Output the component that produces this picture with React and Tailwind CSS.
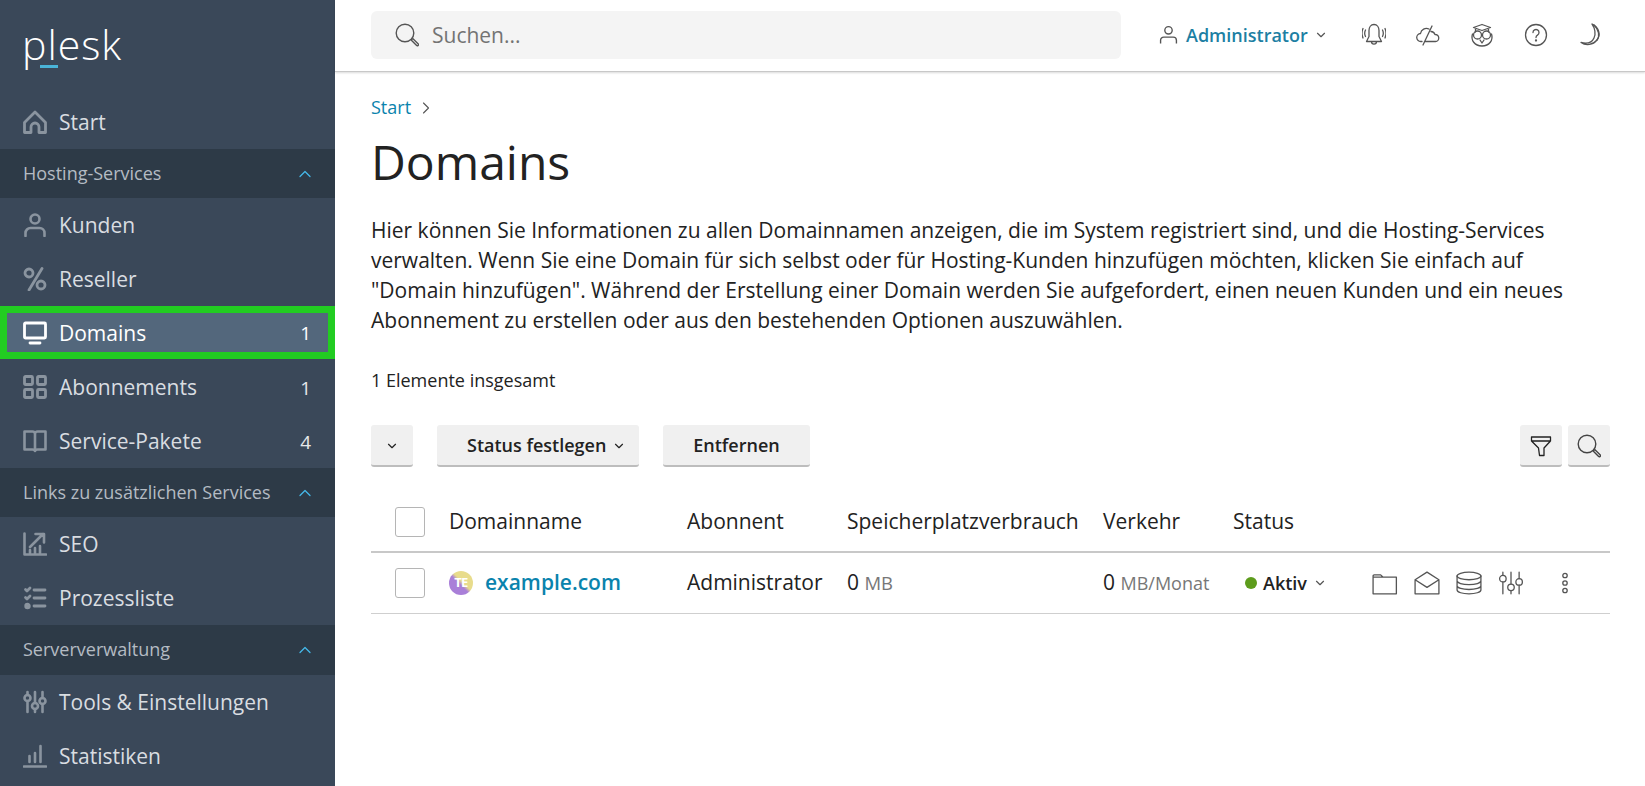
import { ChevronDown, ChevronRight, ChevronUp } from 'lucide-react'

function Icon({ children, className = 'w-6 h-6', stroke = 1.6 }) {
  return (
    <svg viewBox="0 0 24 24" fill="none" stroke="currentColor" strokeWidth={stroke} strokeLinecap="round" strokeLinejoin="round" className={className}>
      {children}
    </svg>
  )
}

const Home = () => <Icon stroke={2.8}><path d="M1.500 12.500 12 2l10.500 10.500v10h-6.500V17a4 4 0 0 0-8 0v5.500H1.500z" /></Icon>
const User = () => <Icon stroke={2.6}><circle cx="12" cy="6" r="4.500" /><path d="M2.500 23v-3a5 5 0 0 1 5-5h9a5 5 0 0 1 5 5v3" /></Icon>
const Percent = () => <Icon stroke={2.8}><circle cx="6" cy="6" r="4" /><circle cx="18" cy="18" r="4" /><path d="M19 1.500 6 23" /></Icon>
const Monitor = () => (
  <Icon stroke={2.8}><rect x="1.500" y="2" width="21" height="15" rx="1" /><path d="M7 22h10" /></Icon>
)
const Grid = () => (
  <Icon stroke={2.800}>
    <rect x="1.500" y="1.500" width="8" height="8" rx="1" />
    <rect x="14.500" y="1.500" width="8" height="8" rx="1" />
    <rect x="1.500" y="14.500" width="8" height="8" rx="1" />
    <rect x="14.500" y="14.500" width="8" height="8" rx="1" />
  </Icon>
)
const Book = () => <Icon stroke={2.600}><path d="M1.500 2.500h8c1.500 0 2.500 1 2.500 2.500 0-1.500 1-2.500 2.500-2.500h8v18h-8c-1 0-2 .5-2.500 1.500-.5-1-1.500-1.500-2.500-1.500h-8zM12 5v17" /></Icon>
const Seo = () => <Icon stroke={2.600}><path d="M1.500 1.500v21h21.500M7 15 20 2M12.500 2H21v8.500M7 21v-3M12 21v-5M17 21v-7" /></Icon>
const Tasks = () => (
  <Icon stroke={2.800}>
    <path d="M2.500 3.500 4 5l3-3M2.500 11.500 4 13l3-3M11 4h11M11 12h11M11 20h11" />
    <circle cx="4.500" cy="20" r="1.800" fill="currentColor" />
  </Icon>
)
const Sliders = ({ stroke = 2.6, className }) => (
  <Icon stroke={stroke} className={className}>
    <path d="M4.500 2v3M4.500 11v11M12 2v11M12 19v3M19.500 2v6M19.500 14v8" />
    <circle cx="4.500" cy="8" r="3" />
    <circle cx="12" cy="16" r="3" />
    <circle cx="19.500" cy="11" r="3" />
  </Icon>
)
const Stats = () => <Icon stroke={2.600}><path d="M1 22.500h22M6.500 18v-6M12 18v-9M17.500 18V2" /></Icon>

const Search = ({ className }) => (
  <svg viewBox="0 0 24 24" fill="none" stroke="currentColor" strokeWidth="1.400" strokeLinecap="round" strokeLinejoin="round" className={className}>
    <circle cx="10" cy="10" r="8.800" />
    <path d="m16.500 16.500 1.500-.8 5 5c.6.6.6 1.200.1 1.700s-1.100.5-1.700-.1l-5-5z" />
  </svg>
)

function NavItem({ icon, label, count }) {
  return (
    <div className="flex items-center h-[54px] pl-[23px] pr-[24px] text-[#d9dde1]">
      <span className="w-6 h-6 text-[#8a949f] shrink-0">{icon}</span>
      <span className="ml-[12px] pt-[2px] text-[21px] flex-1">{label}</span>
      {count && <span className="pt-[2px] text-[19px] text-[#e6e8ea]">{count}</span>}
    </div>
  )
}

function Section({ label, className = 'h-[49px]' }) {
  return (
    <div className={`flex items-center bg-[#2d3a47] pl-[23px] pr-[20px] text-[#b4bbc3] text-[18px] ${className}`}>
      <span className="flex-1 pb-[1px]">{label}</span>
      <ChevronUp className="w-5 h-5 text-[#45b8e8]" strokeWidth={1.500} />
    </div>
  )
}

function Sidebar() {
  return (
    <aside className="w-[335px] shrink-0 bg-[#3a4859] overflow-hidden">
      <div className="h-[95px] pl-[22px] pt-[17px]">
        <div className="relative w-fit text-white text-[41px] leading-[54px] font-light tracking-[1px]">
          plesk
          <span className="absolute left-[18px] top-[48px] w-[18px] h-[3px] bg-[#4ab4d8]" />
        </div>
      </div>
      <NavItem icon={<Home />} label="Start" />
      <Section label="Hosting-Services" />
      <NavItem icon={<User />} label="Kunden" />
      <NavItem icon={<Percent />} label="Reseller" />
      <div className="flex items-center h-[53px] mb-[1px] border-[7px] border-[#22cc22] bg-[#53677c] pl-[16px] pr-[17px] text-white">
        <span className="w-6 h-6 shrink-0"><Monitor /></span>
        <span className="ml-[12px] pt-[2px] text-[21px] flex-1">Domains</span>
        <span className="pt-[2px] text-[19px]">1</span>
      </div>
      <NavItem icon={<Grid />} label="Abonnements" count="1" />
      <NavItem icon={<Book />} label="Service-Pakete" count="4" />
      <Section label="Links zu zusätzlichen Services" />
      <NavItem icon={<Seo />} label="SEO" />
      <NavItem icon={<Tasks />} label="Prozessliste" />
      <Section label="Serververwaltung" className="h-[50px]" />
      <NavItem icon={<Sliders />} label="Tools & Einstellungen" />
      <NavItem icon={<Stats />} label="Statistiken" />
    </aside>
  )
}

function Header() {
  return (
    <header className="h-[72px] shrink-0 flex items-center pl-[36px] pr-[43px] pb-[2px] border-b border-[#c8c8c8] shadow-[0_1px_2px_rgba(0,0,0,0.15)]">
      <div className="w-[750px] h-[48px] flex items-center bg-[#f4f4f4] rounded-md pl-[24px] text-[#737373] text-[21px]">
        <Search className="w-6 h-6 text-[#555] mr-[13px]" />
        <span className="pt-[2px]">Suchen...</span>
      </div>
      <div className="flex items-center ml-[38px] text-[#555]">
        <svg viewBox="0 0 18 18" fill="none" stroke="currentColor" strokeWidth="1.300" className="w-[19px] h-[19px]">
          <circle cx="9" cy="5" r="3.500" />
          <path d="M1.500 17.500v-3a3 3 0 0 1 3-3h9a3 3 0 0 1 3 3v3" />
        </svg>
        <span className="ml-[8px] pt-[1px] text-[18px] font-semibold text-[#1d7fa3]">Administrator</span>
        <ChevronDown className="w-3.5 h-3.5 ml-[6px]" strokeWidth={2} />
      </div>
      <div className="flex items-center gap-[30px] ml-[34px] text-[#555]">
        <Icon stroke={1.300}>
          <path d="M12 1.500c3.200 0 5 2.800 5 6v6l2.500 5h-15l2.500-5v-6c0-3.200 1.800-6 5-6zM9.500 18.500c0 3.500 5 3.500 5 0" />
          <path d="M3.500 7c-1 2-1 4.500 0 6.500M1 5.500c-1.300 3-1.300 6.500 0 9.500M20.500 7c1 2 1 4.500 0 6.500M23 5.500c1.300 3 1.300 6.500 0 9.500" />
        </Icon>
        <Icon stroke={1.300}>
          <path d="M6 18.500H5a4 4 0 0 1-.5-8 6 6 0 0 1 8.500-4.500M15 8.500a4.500 4.500 0 0 1 4 3 3.500 3.500 0 0 1 .5 7H8.500M16 3 7 22" />
        </Icon>
        <Icon stroke={1.300}>
          <path d="M3.500 4.500 12 1.500l8.500 3L12 7.500zM5.500 6v3M18.500 6v3" />
          <circle cx="7.500" cy="12" r="4" />
          <circle cx="16.500" cy="12" r="4" />
          <path d="M2.500 11c-2 6 2 12 9.500 12s11.500-6 9.500-12M10 17l2 3 2-3" />
        </Icon>
        <Icon stroke={1.300}>
          <circle cx="12" cy="12" r="10.500" />
          <path d="M9 9.500a3 3 0 1 1 4.500 2.600c-1 .6-1.500 1.200-1.500 2.400" />
          <circle cx="12" cy="17.500" r=".5" fill="currentColor" />
        </Icon>
        <Icon stroke={1.300}>
          <path d="M14 1c7 3 9 11 5 16s-11 6-16 2.500c6 1.500 11 0 13-4.500 2-4 1-10-2-14z" />
          <path d="M16 2c5 5 6 11 3 15" />
        </Icon>
      </div>
    </header>
  )
}

function Button({ children, className }) {
  return (
    <div className={`h-[42px] pt-[2px] flex items-center bg-[#f0f0f0] rounded-[3px] border-b-2 border-[#bdbdbd] text-[#222] ${className}`}>
      {children}
    </div>
  )
}

function Checkbox() {
  return <div className="w-[30px] h-[30px] bg-white border border-[#b5b5b5] rounded-[3px]" />
}

function Toolbar() {
  return (
    <div className="flex mt-[30.500px]">
      <Button className="w-[42px] justify-center"><ChevronDown className="w-3.5 h-3.5" /></Button>
      <Button className="w-[202px] ml-[24px] pl-[30px] text-[18px] font-semibold">
        Status festlegen
        <ChevronDown className="w-3.5 h-3.5 ml-[6px]" />
      </Button>
      <Button className="w-[147px] ml-[24px] justify-center text-[18px] font-semibold">Entfernen</Button>
      <div className="flex-1" />
      <Button className="w-[42px] justify-center">
        <Icon stroke={1.300}><path d="M2.500 3h19v4l-6.500 7v7.500h-4.500L9.500 14 2.500 7zM2.500 7h19" /></Icon>
      </Button>
      <Button className="w-[42px] ml-[6px] justify-center"><Search className="w-6 h-6 text-[#444]" /></Button>
    </div>
  )
}

function DomainTable() {
  return (
    <div className="mt-[26px] text-[#222] text-[21px]">
      <div className="grid grid-cols-[78px_238px_160px_256px_130px_1fr] items-center h-[60px] border-b-2 border-[#c8c8c8]">
        <div className="pl-[24px]"><Checkbox /></div>
        <div>Domainname</div>
        <div>Abonnent</div>
        <div>Speicherplatzverbrauch</div>
        <div>Verkehr</div>
        <div>Status</div>
      </div>
      <div className="grid grid-cols-[78px_238px_160px_256px_130px_1fr] items-center h-[61px] border-b border-[#cfcfcf]">
        <div className="pl-[24px]"><Checkbox /></div>
        <div className="flex items-center">
          <span className="w-6 h-6 rounded-full bg-[linear-gradient(225deg,#e8dc8c_45%,#a97fd8_55%)] flex items-center justify-center text-white text-[13px] font-bold tracking-tighter">TE</span>
          <span className="ml-[12px] pt-[1px] font-semibold text-[#0a83ad]">example.com</span>
        </div>
        <div className="pt-[1px]">Administrator</div>
        <div className="pt-[1px]">0 <span className="text-[#777] text-[18.500px]">MB</span></div>
        <div className="pt-[1px]">0 <span className="text-[#777] text-[18px]">MB/Monat</span></div>
        <div className="flex items-center pl-[12px]">
          <span className="w-3 h-3 rounded-full bg-[#5d9c1c]" />
          <span className="ml-[6px] pt-[1px] text-[18px] font-semibold">Aktiv</span>
          <ChevronDown className="w-3.5 h-3.5 ml-[6px] text-[#555]" />
          <div className="flex items-center gap-[16px] ml-[45px] text-[#555]">
            <Icon className="w-[26px] h-[26px]" stroke={1.200}><path d="M1 5.500a1 1 0 0 1 1-1h6l2 2h12.500v15.500H1zM1 6.500h9" /></Icon>
            <Icon className="w-[26px] h-[26px]" stroke={1.200}><path d="M1 9 12 2l11 7v13H1zM1 9l11 7 11-7" /></Icon>
            <Icon className="w-[26px] h-[26px]" stroke={1.200}>
              <ellipse cx="12" cy="5.500" rx="11" ry="3.500" />
              <path d="M1 5.500v13c0 2 5 3.500 11 3.500s11-1.500 11-3.500v-13M1 10c0 2 5 3.500 11 3.500S23 12 23 10M1 14.500c0 2 5 3.500 11 3.500s11-1.500 11-3.500" />
            </Icon>
            <Sliders className="w-[26px] h-[26px]" stroke={1.200} />
          </div>
          <svg viewBox="0 0 8 24" fill="none" stroke="currentColor" strokeWidth="1.300" className="w-2 h-6 ml-[37px] text-[#555]">
            <circle cx="4" cy="4.500" r="2.200" />
            <circle cx="4" cy="12" r="2.200" />
            <circle cx="4" cy="19.500" r="2.200" />
          </svg>
        </div>
      </div>
    </div>
  )
}

export default function App() {
  return (
    <div className="flex h-screen overflow-hidden bg-white font-['Open_Sans',sans-serif]">
      <Sidebar />
      <div className="flex-1 flex flex-col min-w-0">
        <Header />
        <main className="pl-[36px] pr-[35px]">
          <div className="flex items-center mt-[22px] text-[#0a83ad] text-[18px]">
            Start
            <ChevronRight className="w-5 h-5 ml-[5px] text-[#555]" strokeWidth={1.300} />
          </div>
          <h1 className="mt-[7px] text-[48px] leading-[68px] text-[#222]">Domains</h1>
          <p className="mt-[18.500px] max-w-[1200px] text-[#222] text-[21px] leading-[30.300px]">
            Hier können Sie Informationen zu allen Domainnamen anzeigen, die im System registriert sind, und die Hosting-Services verwalten. Wenn Sie eine Domain für sich selbst oder für Hosting-Kunden hinzufügen möchten, klicken Sie einfach auf "Domain hinzufügen". Während der Erstellung einer Domain werden Sie aufgefordert, einen neuen Kunden und ein neues Abonnement zu erstellen oder aus den bestehenden Optionen auszuwählen.
          </p>
          <div className="mt-[31.500px] text-[#222] text-[18px]">1 Elemente insgesamt</div>
          <Toolbar />
          <DomainTable />
        </main>
      </div>
    </div>
  )
}
